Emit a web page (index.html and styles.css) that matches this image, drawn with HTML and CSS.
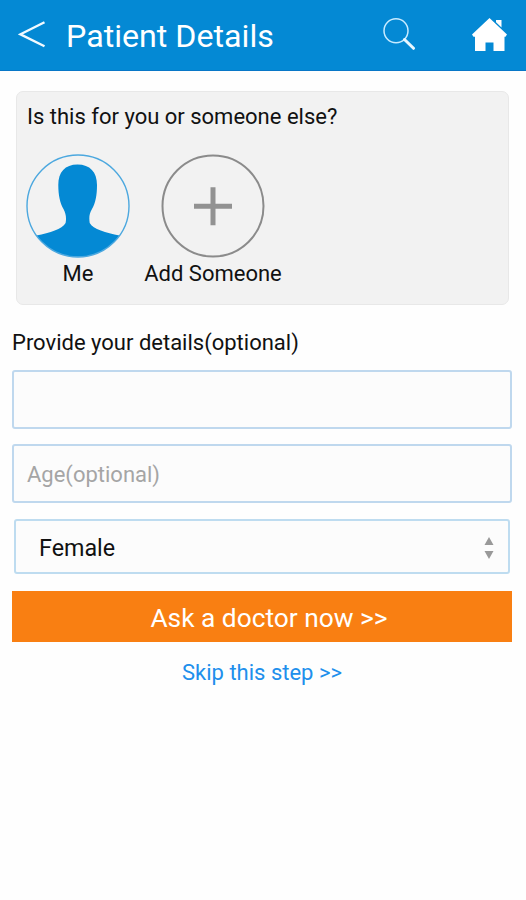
FILE: index.html
```html
<!DOCTYPE html>
<html lang="en">
<head>
<meta charset="utf-8">
<title>Patient Details</title>
<link rel="stylesheet" href="styles.css">
</head>
<body>
<header class="bar">
  <svg class="back" viewBox="18 20 28 28"><path d="M44.5 22.3 20.5 34.3 44.5 46.3"/></svg>
  <h1 class="title"><span>Patient Details</span></h1>
  <svg class="search" viewBox="382 16 34 34"><circle cx="396" cy="30.7" r="12"/><path d="M404.5 39.5 413.5 48.3"/></svg>
  <svg class="home" viewBox="471 16 37 36"><path d="M489.5 18 507 34.500 505.500 36.700H504.500V51H493.500V42.500H485.500V51H475V36.700H473.500L472 34.500ZM496 20H501.500V27.500L496 22.300Z"/></svg>
</header>
<main>
  <section class="card">
    <p class="question"><span>Is this for you or someone else?</span></p>
    <div class="people">
      <div class="person me">
        <svg class="avatar" viewBox="0 0 104 104">
          <path class="figure" d="M51.500 10.500C64 10.500 71 18 71 31C71 41 69.500 49 66 55C63 60 63 64 63.700 69C67 75 80 79 93.500 81.500A51 51 0 0 1 10.500 81.500C24 79 36 75 39.600 69C40.500 64 40 60 37.500 55C34 49 32.300 41 32.300 31C32.300 18 39 10.500 51.500 10.500Z"/>
          <circle class="ring" cx="52" cy="52" r="51"/>
        </svg>
        <span class="name">Me</span>
      </div>
      <div class="person add">
        <svg class="avatar" viewBox="0 0 104 104">
          <circle class="ring" cx="52" cy="52" r="50.500"/>
          <path class="plus" d="M33 52.300H71M52 33.300V71.300"/>
        </svg>
        <span class="name">Add Someone</span>
      </div>
    </div>
  </section>
  <form class="details">
    <p class="label"><span>Provide your details(optional)</span></p>
    <div class="field"></div>
    <div class="field age"><span>Age(optional)</span></div>
    <div class="select"><span>Female</span>
      <svg class="arrows" viewBox="0 0 10 24"><path d="M5 1 9.500 9H.5ZM.5 15H9.500L5 23Z"/></svg>
    </div>
    <div class="ask"><span>Ask a doctor now &gt;&gt;</span></div>
    <div class="skip"><span>Skip this step &gt;&gt;</span></div>
  </form>
</main>
</body>
</html>
```
FILE: styles.css
```css
* { box-sizing: border-box; }
body {
  margin: 0;
  height: 900px;
  background: #fefefe;
  color: #111;
  font: 22px/26px Roboto, "Liberation Sans", sans-serif;
}
h1, p { margin: 0; }
svg { display: block; flex: none; }
.bar {
  display: flex;
  height: 71px;
  background: #0489d4;
  border-bottom: 1px solid #0877c7;
  color: #fff;
}
.back { width: 28px; height: 28px; margin: 20px 0 0 18px; }
.back path { fill: none; stroke: #f2faff; stroke-width: 2.4; }
.title { width: 316px; margin: 16px 0 0 20px; font-size: 32.2px; line-height: 40px; font-weight: 400; }
.search { width: 34px; height: 34px; margin-top: 16px; }
.search circle { fill: none; stroke: #c8ebff; stroke-width: 1.5; }
.search path { stroke: #e8f7ff; stroke-width: 3; stroke-linecap: round; }
.home { width: 37px; height: 36px; margin: 16px 0 0 55px; }
.home path { fill: #fff; }
.card {
  width: 493px;
  height: 214px;
  margin: 20px 0 0 16px;
  padding: 12px 10px 0;
  background: #f2f2f2;
  border: 1px solid #e8e8e8;
  border-radius: 7px;
}
.people { display: flex; margin-top: 24px; }
.person { display: flex; flex-direction: column; align-items: center; }
.me { width: 104px; margin-left: -1px; }
.add { width: 140px; margin-left: 13px; }
.avatar { width: 104px; height: 104px; }
.name { margin-top: 3px; }
.figure { fill: #0489d4; }
.ring { fill: none; stroke-width: 2; stroke: #8b8b8b; }
.me .ring { stroke: #4ca8df; stroke-width: 1.4; }
.plus { stroke: #929292; stroke-width: 5; }
.details { width: 500px; margin: 25px 0 0 12px; }
.label { height: 40px; }
.field {
  height: 59px;
  margin-bottom: 15px;
  padding: 16px 13px;
  background: #fcfcfc;
  border: 2px solid #bfd8ee;
  border-radius: 3px;
}
.age { margin-bottom: 16px; color: #a5a5a5; }
.select {
  display: flex;
  align-items: center;
  justify-content: space-between;
  width: 496px;
  height: 55px;
  margin-left: 2px;
  padding: 2px 14px 0 23px;
  background: #fcfcfc;
  border: 2px solid #bedcf0;
  border-radius: 3px;
  font-size: 23.3px;
}
.arrows { width: 10px; height: 24px; fill: #999; }
.ask {
  height: 51px;
  margin: 17px 0 18px;
  padding-left: 14px;
  background: #f97f12;
  color: #fff;
  font-size: 26.3px;
  line-height: 54px;
  text-align: center;
}
.skip { color: #208fec; text-align: center; }
```
